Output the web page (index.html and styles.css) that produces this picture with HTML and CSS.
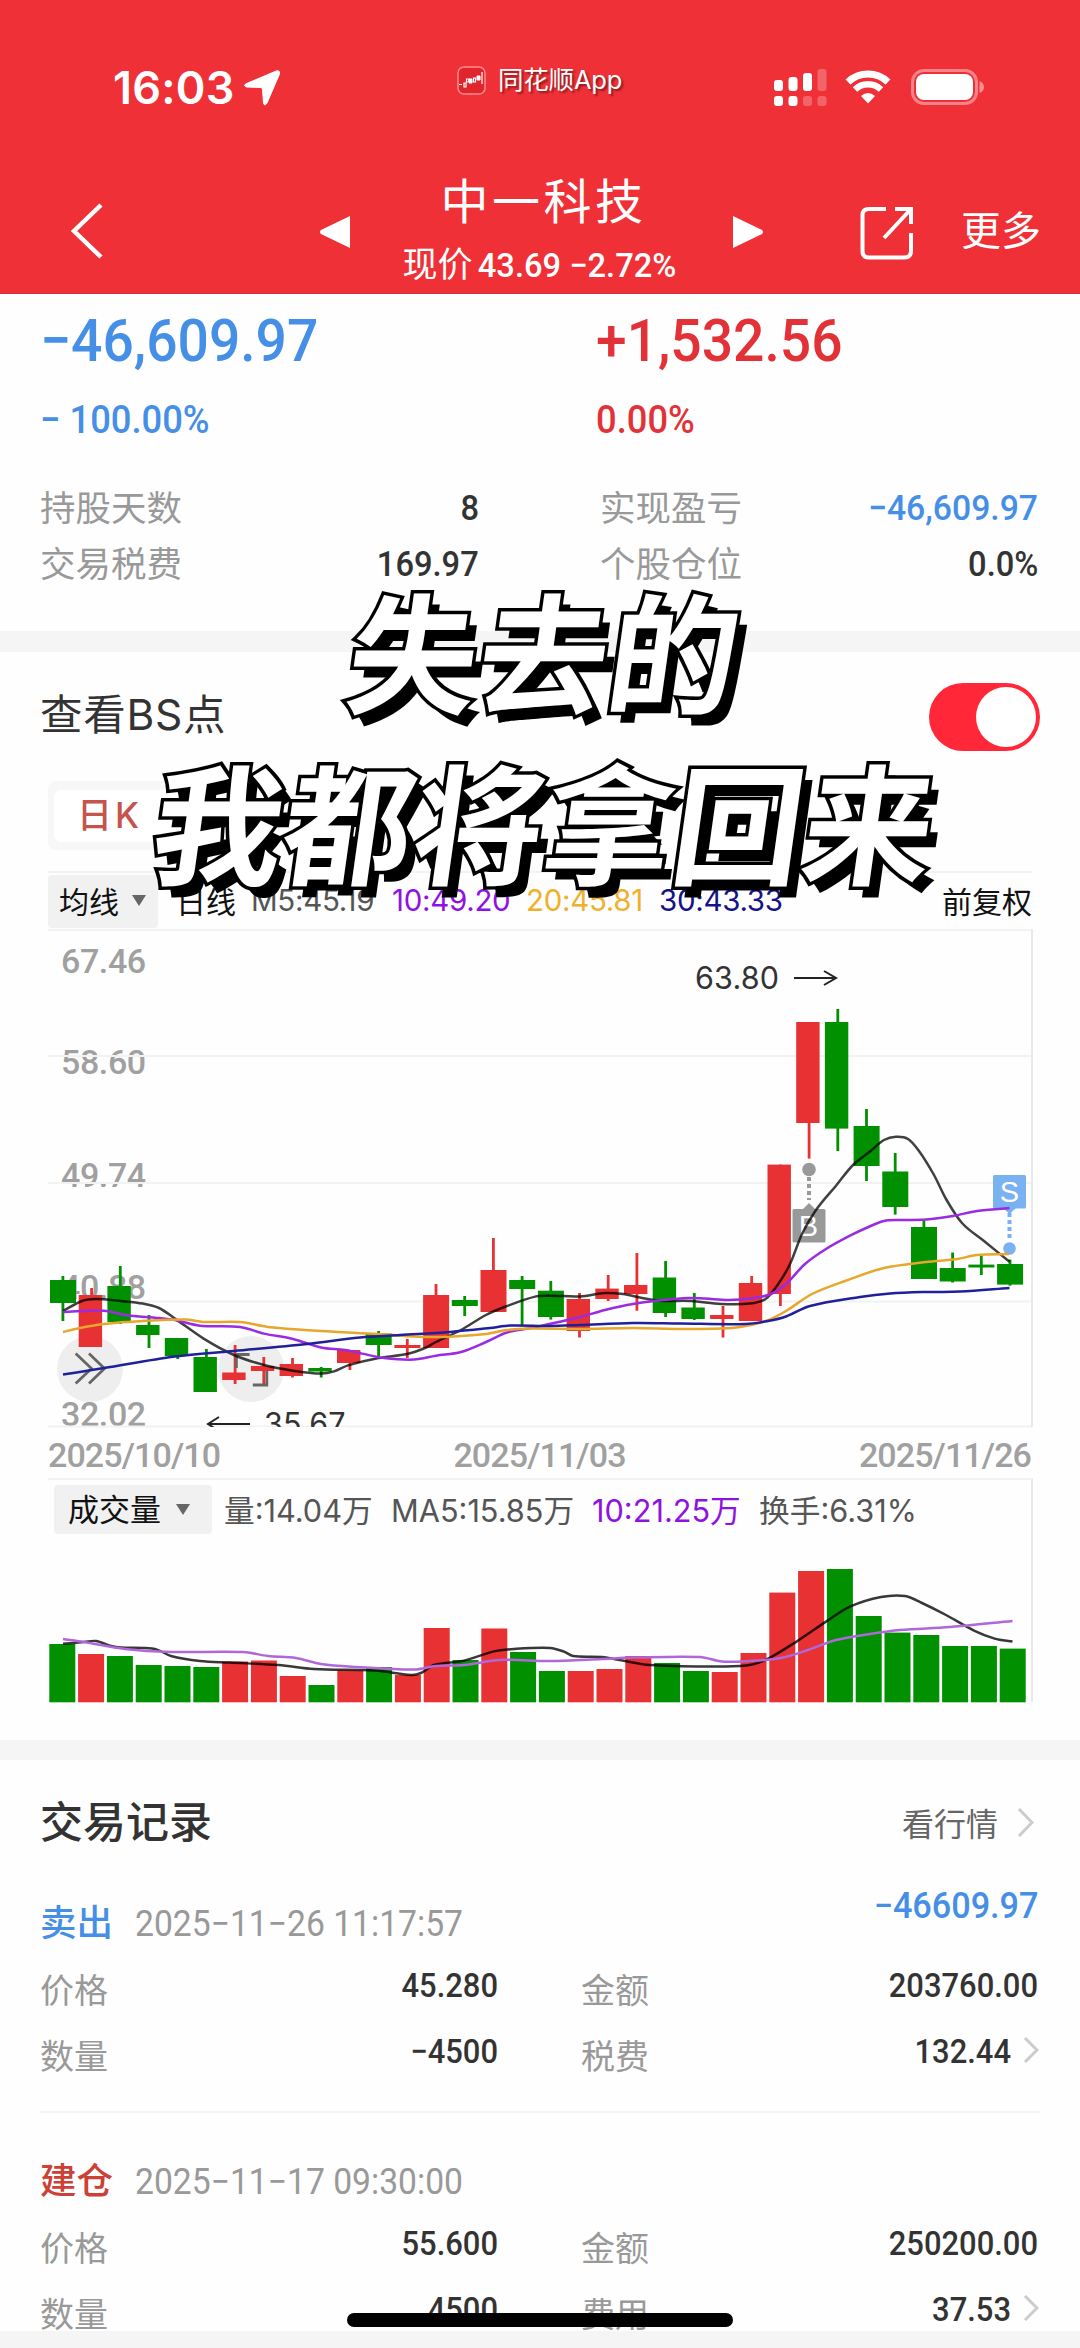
FILE: index.html
```html
<!DOCTYPE html>
<html lang="zh-CN">
<head>
<meta charset="utf-8">
<title>中一科技</title>
<link rel="stylesheet" href="styles.css">
</head>
<body>
<div class="screen">
  <header class="header">
    <div class="status">
      <div class="clock">16:03
        <svg class="loc" width="36" height="36" viewBox="0 0 36 36"><path d="M31 1.500 Q36 -1 35.500 4 L23 33 Q20.500 37 19.500 33 L18.500 19 Q18 17.500 16.500 17.500 L2.500 17 Q-1 15.500 2 13.800Z" fill="#fff" stroke="#fff" stroke-width="1"/></svg>
      </div>
      <div class="app">
        <svg width="29" height="29" viewBox="0 0 29 29"><rect x="1" y="1" width="27" height="27" rx="6" fill="#e0262c" stroke="#ff8a8c" stroke-width="1.500"/><path d="M2 18.500H5M12 16V13H15V17H12M20 14V10H23V14H20" fill="#fff" stroke="#fff" stroke-width="1"/><path d="M7 17H9V21H7ZM9.500 13H12V16H9.500ZM16.500 12H18.500V16H16.500ZM25 6V18" fill="none" stroke="#fff" stroke-width="1.200"/></svg>
        <span>同花顺App</span>
      </div>
      <div class="sys">
        <svg width="53" height="38" viewBox="0 0 53 38" fill="#fff"><rect x="0" y="11" width="9" height="11" rx="3"/><rect x="14.500" y="8" width="9" height="14" rx="3"/><rect x="29" y="4" width="9" height="18" rx="3"/><rect x="43.500" y="0" width="9" height="22" rx="3" opacity=".25"/><rect x="0" y="27" width="9" height="10" rx="3"/><rect x="14.500" y="27" width="9" height="10" rx="3"/><rect x="29" y="27" width="9" height="10" rx="3" opacity=".25"/><rect x="43.500" y="27" width="9" height="10" rx="3" opacity=".25"/></svg>
        <svg class="wifi" width="46" height="34" viewBox="0 0 46 34"><path d="M3 12 A29 29 0 0 1 43 12" fill="none" stroke="#fff" stroke-width="7"/><path d="M10 19.500 A19 19 0 0 1 36 19.500" fill="none" stroke="#fff" stroke-width="6.500"/><path d="M23 33.500 L16 26 Q23 20 30 26Z" fill="#fff"/></svg>
        <svg class="batt" width="74" height="36" viewBox="0 0 74 36"><rect x="1.500" y="1.500" width="64" height="33" rx="11.500" fill="none" stroke="#fff" stroke-opacity=".4" stroke-width="3"/><rect x="5" y="5" width="57" height="26" rx="8" fill="#fff"/><path d="M68.500 12 Q73 14 73 18 Q73 22 68.500 24Z" fill="#fff" opacity=".45"/></svg>
      </div>
    </div>
    <div class="nav">
      <svg class="back" width="34" height="58" viewBox="0 0 34 58"><path d="M31 3 L4 29 L31 55" fill="none" stroke="#fff" stroke-width="4.500"/></svg>
      <svg class="prev" width="33" height="34" viewBox="0 0 33 34"><path d="M31 1 L2 15 Q0 17 2 19 L31 33Z" fill="#fff"/></svg>
      <div class="stock">
        <div class="stock-name">中一科技</div>
        <div class="stock-price">现价<span class="num">43.69 −2.72%</span></div>
      </div>
      <svg class="next" width="33" height="34" viewBox="0 0 33 34"><path d="M2 1 L31 15 Q33 17 31 19 L2 33Z" fill="#fff"/></svg>
      <svg class="share" width="54" height="54" viewBox="0 0 54 54"><path d="M26 3 H9 Q2.500 3 2.500 9 V45 Q2.500 51.500 9 51.500 H44 Q51 51.500 51 45 V27 M35 3 H51 V18 M51 3 L24 32" fill="none" stroke="#fff" stroke-width="4"/></svg>
      <span class="more">更多</span>
    </div>
  </header>

  <section class="summary">
    <div class="totals">
      <div><div class="big blue"><span class="num">−46,609.97</span></div><div class="pct blue"><span class="num">− 100.00%</span></div></div>
      <div><div class="big red"><span class="num">+1,532.56</span></div><div class="pct red"><span class="num">0.00%</span></div></div>
    </div>
    <div class="facts">
      <div class="fact"><span>持股天数</span><b class="num end">8</b></div>
      <div class="fact"><span>实现盈亏</span><b class="num end blue">−46,609.97</b></div>
      <div class="fact"><span>交易税费</span><b class="num end">169.97</b></div>
      <div class="fact"><span>个股仓位</span><b class="num end">0.0%</b></div>
    </div>
  </section>

  <section class="market">
    <div class="bs"><span>查看BS点</span><i class="toggle"></i></div>
    <div class="tabs"><span class="tab">日K</span></div>
    <div class="ma">
      <span class="drop">均线<i class="caret"></i></span>
      <span class="day">日线</span><span class="m5">M5:45.19</span><span class="m10">10:49.20</span><span class="m20">20:45.81</span><span class="m30">30:43.33</span>
      <span class="adj">前复权</span>
    </div>
    <svg class="kline" width="986" height="499" viewBox="48 929 986 499">
      <g class="ylabels"><text x="61" y="973">67.46</text><text x="61" y="1074">58.60</text><text x="61" y="1187">49.74</text><text x="61" y="1299">40.88</text><text x="61" y="1426">32.02</text></g>
      <path class="grid" d="M48 930H1032 M48 1056H1032 M48 1183H1032 M48 1301.500H1032 M48 1426.500H1032"/>
      <path class="edge" d="M1032 929V1427"/>
      <circle cx="90" cy="1369" r="33" class="fab"/><circle cx="251" cy="1369" r="33" class="fab"/>
      <g id="candles"></g>
      <path class="fabicon" d="M75.700 1353.500 L91.500 1368.500 L75.700 1383.500 M89 1353.500 L104.500 1368.500 L89 1383.500 M236.400 1368 V1354.500 H249.600 M266.800 1371 V1385 H252.800"/>
      <g class="buy"><circle cx="809" cy="1169.500" r="6.800"/><path d="M809 1177V1200" class="dots"/><path d="M802 1210L809 1203L816 1210Z"/><rect x="792.500" y="1209" width="33" height="33.500" rx="1.500"/><text x="808.500" y="1236">B</text></g>
      <g class="sell"><rect x="993" y="1175" width="33" height="33.500" rx="1.500"/><path d="M1003 1208L1009.500 1214L1016 1208Z"/><path d="M1009.500 1213V1238" class="dots"/><circle cx="1009.500" cy="1248.500" r="6.300"/><text x="1009.500" y="1202">S</text></g>
      <g id="averages"></g>
      <g class="peak"><text x="695" y="989">63.80</text><path d="M794 978H836 M824 971L836 978L824 985"/><text x="264" y="1435">35.67</text><path d="M250 1424H208 M219 1417L208 1424L219 1431"/></g>
      <rect x="207" y="1427" width="140" height="2" fill="#fff"/>
    </svg>
    <div class="dates"><span>2025/10/10</span><span>2025/11/03</span><span>2025/11/26</span></div>
    <div class="volume">
      <div class="vol-info"><span class="drop">成交量<i class="caret"></i></span><span class="v1">量:14.04万</span><span class="v2">MA5:15.85万</span><span class="v3">10:21.25万</span><span class="v4">换手:6.31%</span></div>
      <svg class="bars" width="984" height="150" viewBox="48 1554 984 150"><g id="volumes"></g><g id="volume-averages"></g></svg>
    </div>
  </section>

  <section class="trades">
    <div class="trades-head"><h2>交易记录</h2><span class="quote">看行情<svg width="17" height="31" viewBox="0 0 17 31"><path d="M2 2L15 15.500L2 29" class="chev"/></svg></span></div>
    <article class="trade">
      <div class="trade-head"><span class="side blue">卖出</span><time class="num">2025−11−26 11:17:57</time><b class="num end blue pl">−46609.97</b></div>
      <div class="trade-row"><span>价格</span><b class="num end">45.280</b><span class="c2">金额</span><b class="num end">203760.00</b></div>
      <div class="trade-row"><span>数量</span><b class="num end">−4500</b><span class="c2">税费</span><b class="num end">132.44</b><svg width="16" height="28" viewBox="0 0 16 28"><path d="M2 2L14 14L2 26" class="chev"/></svg></div>
    </article>
    <article class="trade">
      <div class="trade-head"><span class="side open">建仓</span><time class="num">2025−11−17 09:30:00</time></div>
      <div class="trade-row"><span>价格</span><b class="num end">55.600</b><span class="c2">金额</span><b class="num end">250200.00</b></div>
      <div class="trade-row"><span>数量</span><b class="num end">4500</b><span class="c2">费用</span><b class="num end">37.53</b><svg width="16" height="28" viewBox="0 0 16 28"><path d="M2 2L14 14L2 26" class="chev"/></svg></div>
    </article>
  </section>
  <div class="foot"></div>
  <div class="home"></div>
  <div class="caption"><p>失去的</p><p>我都将拿回来</p></div>
</div>
<script src="chart.js"></script>
</body>
</html>
```
FILE: styles.css
```css
* { box-sizing: border-box; }
body { margin: 0; background: #fff; font-family: Inter, "Noto Sans CJK SC", sans-serif; color: #333; }
p, h2 { margin: 0; }
svg { display: block; flex: none; }
.screen { position: relative; width: 1080px; height: 2348px; overflow: hidden; background: #fefefe; }
.num { font-family: Roboto, "Noto Sans CJK SC", sans-serif; display: inline-block; white-space: pre; transform: scaleX(.92); transform-origin: left; font-weight: 500; }
.num.end { transform-origin: right; }
.blue { color: #468fe6; }
.red { color: #e33237; }

.header { height: 294px; background: #ef3137; color: #fff; border-bottom: 1px solid #c9383c; }
.status { height: 156px; padding: 69px 94px 0 113px; display: flex; align-items: flex-start; }
.clock { display: flex; align-items: center; gap: 10px; width: 344px; font-size: 45px; line-height: 37px; font-weight: 600; letter-spacing: .2px; }
.app { display: flex; gap: 12px; width: 317px; margin-top: -5px; align-items: center; font-size: 25.5px; line-height: 32px; letter-spacing: -.2px; text-shadow: 2px 2px 2px #8c1a1e; }
.sys { display: flex; align-items: flex-start; }
.wifi { margin: 1px 0 0 18px; }
.batt { margin: 0 0 0 20px; }
.nav { height: 137px; display: flex; padding: 0 39px 0 70px; }
.back { margin-top: 46px; }
.prev { margin: 59px 0 0 215px; }
.stock { width: 377px; margin-left: 2px; text-align: center; }
.stock-name { margin-top: 11px; font-size: 48px; line-height: 70px; letter-spacing: 3.500px; padding-left: 2px; }
.stock-price { margin-top: 1px; font-size: 35px; line-height: 52px; white-space: nowrap; padding-left: 2px; }
.stock-price .num { padding-left: 5px; font-size: 34px; transform: scaleX(.96); }
.next { margin: 59px 0 0 0; }
.share { margin: 50px 0 0 96px; }
.more { margin: 46px 0 0 47px; font-size: 40px; line-height: 58px; white-space: nowrap; }

.summary { height: 337px; padding: 0 42px 0 40px; }
.totals { display: grid; grid-template-columns: 556px 1fr; height: 187px; }
.big { font-size: 60px; line-height: 70px; margin-top: 10px; }
.pct { font-size: 39.5px; line-height: 50px; margin-top: 18px; }
.facts { display: grid; grid-template-columns: 439px 438px; column-gap: 121px; }
.fact { display: flex; justify-content: space-between; height: 56px; line-height: 56px; font-size: 35.5px; color: #999; }
.fact .num { line-height: 55px; }
.fact .blue { transform: scaleX(.95); }
.fact b:not(.blue), .trade-row b { color: #333; }

.market { border-top: 21px solid #f5f5f5; height: 1109px; padding: 0 40px 0 48px; }
.bs { height: 129px; margin-left: -8px; display: flex; align-items: center; justify-content: space-between; font-size: 42.5px; letter-spacing: .7px; }
.bs span { margin-top: -11px; }
.toggle { width: 111px; height: 68px; border-radius: 34px; background: #ff2738; padding: 4px; }
.toggle::after { content: ""; display: block; width: 60px; height: 60px; border-radius: 50%; background: #fff; margin-left: 43px; }
.tabs { height: 69px; width: 984px; background: linear-gradient(90deg, #f7f7f7 0 150px, #fefefe 150px); border-radius: 8px; padding: 9px 6px; }
.tab { display: block; width: 140px; height: 52px; border-radius: 8px; background: #fff; padding-left: 23px; line-height: 50px; font-size: 35px; font-weight: 500; color: #c4544c; letter-spacing: 3px; }
.ma { height: 58px; margin-top: 21px; width: 984px; border-top: 2px solid #f2f2f2; display: flex; align-items: center; font-size: 30px; color: #111; white-space: nowrap; }
.drop { display: flex; align-items: center; justify-content: space-between; background: #f1f1f1; border-radius: 4px; color: #111; }
.ma .drop { width: 110px; height: 53px; padding: 0 12px 2px 11px; }
.ma > span:not(.drop) { padding-bottom: 2px; }
.caret { border: 7px solid transparent; border-top: 11px solid #666; border-bottom: 0; }
.day { width: 93px; padding-left: 18px; }
.m5 { width: 141px; color: #555; }
.m10 { width: 134px; color: #9012e2; }
.m20 { width: 133px; color: #efb02c; }
.m30 { color: #141488; }
.adj { margin-left: auto; }
.ma .m5, .ma .m10, .ma .m20, .ma .m30 { font-size: 29.5px; letter-spacing: -.3px; }
.kline { overflow: hidden; }
.grid { stroke: #f2f2f2; stroke-width: 2; }
.edge { stroke: #e9e9e9; stroke-width: 2; }
.ylabels { font: 500 34px Roboto, sans-serif; letter-spacing: -.4px; fill: #a0a0a0; }
.fab { fill: #eee; }
.fabicon { fill: none; stroke: #666; stroke-width: 2.800; }
.peak { font: 30.5px Inter, sans-serif; letter-spacing: .2px; fill: #333; }
.peak path { fill: none; stroke: #222; stroke-width: 2; }
.buy { fill: #999; stroke: none; }
.sell { fill: #7ab2f1; }
.buy text, .sell text { fill: #fff; font: 29px "Liberation Sans", sans-serif; text-anchor: middle; }
.dots { fill: none; stroke: #999; stroke-width: 4; stroke-dasharray: 4 3; }
.sell .dots { stroke: #7ab2f1; }
.up { fill: #e73132; }
.down { fill: #009000; }
.avg { fill: none; stroke-width: 2.500; stroke-linejoin: round; }
.dates { height: 50px; width: 983px; display: flex; justify-content: space-between; font: 500 34px/54px Roboto, sans-serif; letter-spacing: -.9px; color: #a0a0a0; }
.volume { width: 985px; height: 224px; border-top: 2px solid #f2f2f2; border-right: 2px solid #e9e9e9; }
.vol-info { display: flex; height: 74px; padding: 5px 0 0 6px; align-items: flex-start; font-size: 30.7px; line-height: 51px; color: #555; white-space: nowrap; }
.vol-info .drop { width: 158px; height: 49px; padding: 0 22px 0 14px; font-size: 31px; line-height: 49px; }
.v1 { margin-left: 12px; width: 167px; }
.v2 { width: 201px; }
.v3 { width: 167px; color: #9012e2; }

.trades { border-top: 20px solid #f5f5f5; padding: 0 40px; }
.trades-head { height: 120px; display: flex; justify-content: space-between; align-items: center; padding: 4px 6px 0 0; }
.trades-head h2 { font-size: 43px; font-weight: 500; margin-top: -6px; }
.quote { display: flex; align-items: center; gap: 19px; font-size: 32px; color: #666; }
.chev { fill: none; stroke: #ccc; stroke-width: 3; }
.trade { height: 257px; padding-top: 7px; }
.trade:first-of-type { height: 233px; border-bottom: 2px solid #f4f4f4; }
.trade + .trade { padding-top: 32px; }
.trade-head { height: 71px; display: flex; align-items: center; font-size: 36px; }
.side { font-size: 36.5px; font-weight: 500; margin: -4px 22px 0 0; }
.open { color: #cc4036; }
.trade-head time { color: #999; font-size: 36px; font-weight: 400; margin-top: 2px; transform: scaleX(.935); }
.trade-head .pl { margin: -34px 2px 0 auto; transform: scaleX(.95); }
.trade-row { height: 66px; display: grid; grid-template-columns: 100px 360px 181px 1fr auto; align-items: center; font-size: 34px; color: #999; }
.trade-row span { margin-top: -5px; }
.trade-row b { text-align: right; padding-bottom: 12px; margin-right: 2px; transform: scaleX(.91); }
.trade-row .c2 { margin-left: 81px; }
.trade-row svg { margin: -14px 1px 0 10px; }

.foot { position: absolute; left: 0; right: 0; top: 2331px; bottom: 0; background: #f5f5f5; }
.home { position: absolute; left: 347px; top: 2313px; width: 386px; height: 14px; border-radius: 7px; background: #000; }
.caption { position: absolute; left: 4px; top: 571px; width: 1080px; text-align: center; font-size: 130px; line-height: 171px; font-weight: 700; color: #fff; }
.caption p { transform: skewX(-8deg); -webkit-text-stroke: 7px #000; paint-order: stroke fill; text-shadow: 11px 11px 0 #000; }
```
FILE: chart.js
```js
// Each candle: direction, body top, body bottom, wick top, wick bottom, wide flag
const candles = [
  ['d',1280,1303,1276,1321,1],['u',1295,1347,1288,1347],['d',1286,1322,1266,1324],['d',1325,1335,1315,1348],
  ['d',1338,1356,1338,1359],['d',1357,1392,1349,1392],['u',1372.5,1380,1345,1384],['u',1366,1371,1357,1386],
  ['u',1364,1376,1358,1377.5],['d',1368,1371.5,1367,1377.5],['u',1350,1363,1350,1370],['d',1333.5,1345,1331,1356,1],
  ['u',1345,1348,1339,1358,1],['u',1295,1348,1284,1348,1],['d',1300,1306,1296,1316,1],['u',1270,1312,1238,1312,1],
  ['d',1280,1289,1276,1325,1],['d',1290.7,1317,1281,1319.6,1],['u',1299,1331,1293,1337.5],['u',1288.6,1299,1275,1301],
  ['u',1285,1294,1253,1310.7],['d',1277.5,1313,1261,1317],['d',1307.5,1319,1293,1320],['u',1315,1319,1306,1337.5],
  ['u',1283,1321,1276,1321],['u',1164.6,1294,1164.6,1306],['u',1022,1123,1022,1158.6],['d',1022,1128.6,1009,1151],
  ['d',1126,1166,1109,1181,1],['d',1171.5,1207,1153,1214.6,1],['d',1227,1279,1220.7,1279,1],['d',1268,1281.5,1252.5,1282.5,1],
  ['d',1264.6,1267.5,1255.7,1275,1],['d',1264,1284.6,1259.6,1285.7,1]
];
const volumeTops = [1644,1654,1656,1665,1666,1667,1661.5,1660.5,1676,1685,1670.5,1667,1675,1628,1660,1628.5,1652,
  1671,1671,1669,1656,1663,1671,1672,1653,1592.6,1571,1569,1616,1632.6,1635,1646,1646,1648.6];

const ma5 = [63,1311,82,1301,96,1299,121,1301,143,1303.6,159,1308,175,1318.6,203.6,1338.6,234,1355,264,1365,293,1370.7,
  321,1373.6,334,1371.4,348,1365.4,378.6,1358,407,1354,425,1348,436,1342,461,1330,486,1315,507,1306,536,1296.4,550,1295.7,
  580,1296.4,605,1293,623,1294,640,1297.5,659,1300.7,691,1301,721,1304,750,1303.6,765.6,1299,777.6,1285,790,1264,802,1234,
  815.5,1210.7,836,1185.7,853,1165,870.6,1151,884,1140,896,1136.8,908,1139,919,1151,934,1175,946,1199,962,1223,984,1241,1009.5,1261.8];
const ma10 = [63,1312,104,1310.7,125,1315,159,1318,175,1320,200,1325.7,240,1327,264,1333.6,293,1339,321,1347.5,345,1350,
  362,1353.6,384,1358,414,1359.6,436,1355.7,461,1352,486,1342,507,1332.5,528,1328.6,545,1325,580,1317,605,1310,633,1304,
  664,1300,688,1298,705,1298.6,729,1300,753.5,1298,771,1294,786,1284,805,1264,826,1249,850,1235.7,870.6,1226,884,1221,
  898,1220,926,1219.6,953,1216,977,1211,1009.5,1208];
const ma20 = [63,1332,80,1328,104,1324,143,1321,186,1319.6,203,1322,240,1322,268,1327,321,1331,378,1334,425,1337,461,1336,
  486,1334,507,1330,530,1328.6,580,1329,633,1328,680,1329,721,1328.6,740,1327,766,1321,786,1311,812,1294,845,1281,884,1268,
  926,1262,957,1259,977,1255,1009,1254];
const ma30 = [63,1374.6,104,1368,175,1356.5,234,1351,307,1344,360,1337.5,400,1335,450,1332,490,1328,510,1325.5,550,1326,
  580,1325,633,1323,680,1323.5,745,1324,768,1321,786,1316.5,810,1306,860,1297,890,1293.5,926,1292,960,1291.6,1009.5,1288];
const vol5 = [63,1643.7,84,1642,96,1641,111,1646,121,1647.6,143,1648,157,1649.6,171,1656,200,1661,229,1662.6,278.6,1665,
  314,1669,375,1670.6,411,1675,421,1673,434,1665,464,1660.6,493,1651.6,514,1649,550,1648,564,1651.6,573,1656,602,1657,
  622.6,1660.6,650,1665,740,1666,764,1660.6,798,1640.6,826,1621.6,850,1606.6,881,1597,905,1596,922,1603,946,1615,974,1630.6,
  994.6,1638.6,1012.5,1641.6];
const vol10 = [63,1639,84,1642,125,1649,171,1652,243,1652,268,1656,296,1658,321,1664,357,1667,414,1669.6,436,1666,464,1665,
  500,1660,550,1661,602,1659,633,1657.6,700,1657,722,1661.6,750,1661,781,1658,805,1651,836,1640,870,1634,900,1630,950,1627,1012.5,1621];

const cls = { u: 'up', d: 'down' };
const rect = (c, x, y, w, h) => `<rect class="${c}" x="${x}" y="${y}" width="${w}" height="${h}"/>`;

// Smooth cubic path through the points, slopes taken from the neighbours
function curve(points, colour) {
  const p = [];
  for (let i = 0; i < points.length; i += 2) p.push([points[i], points[i + 1]]);
  const slope = p.map((q, i) => {
    const a = p[Math.max(0, i - 1)], b = p[Math.min(p.length - 1, i + 1)];
    return (b[1] - a[1]) / (b[0] - a[0]);
  });
  let d = `M${p[0]}`;
  for (let i = 1; i < p.length; i++) {
    const h = (p[i][0] - p[i - 1][0]) / 3;
    d += ` C${p[i - 1][0] + h} ${p[i - 1][1] + slope[i - 1] * h} ${p[i][0] - h} ${p[i][1] - slope[i] * h} ${p[i]}`;
  }
  return `<path class="avg" stroke="${colour}" d="${d}"/>`;
}
const fill = (id, html) => { document.getElementById(id).innerHTML = html; };

fill('candles', candles.map(([dir, top, bottom, high, low, wide], i) => {
  const x = 50 + 28.7 * i;
  return rect(cls[dir], x + 11.5, high, 2.8, low - high) + rect(cls[dir], x, top, wide ? 26 : 23.4, bottom - top);
}).join(''));
fill('averages', curve(ma5, 'rgba(0,0,0,.75)') + curve(ma10, '#9a2be0') + curve(ma20, '#e7a62c') + curve(ma30, '#20209a'));
fill('volumes', volumeTops.map((top, i) => rect(cls[candles[i][0]], 49.3 + 28.8 * i, top, 26, 1702.3 - top)).join(''));
fill('volume-averages', curve(vol5, 'rgba(0,0,0,.78)') + curve(vol10, '#b067dc'));
```
